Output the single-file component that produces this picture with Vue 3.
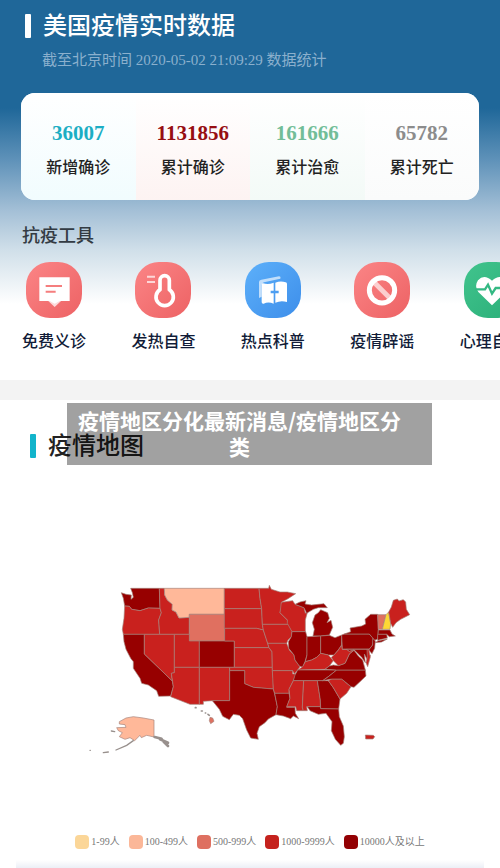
<template>
  <main class="page">
    <section class="overview">
      <header class="heading">
        <h1 class="title title-light">美国疫情实时数据</h1>
        <p class="updated">截至北京时间 2020-05-02 21:09:29 数据统计</p>
      </header>

      <dl class="stats">
        <div v-for="item in stats" :key="item.label" class="stat" :class="item.type">
          <dt>{{ item.label }}</dt>
          <dd>{{ item.value }}</dd>
        </div>
      </dl>

      <h2 class="tools-title">抗疫工具</h2>
      <nav class="tools">
        <a v-for="tool in tools" :key="tool.name" href="#" class="tool">
          <span class="tool-icon" :class="tool.color">
            <svg v-if="tool.icon === 'chat'" viewBox="0 0 168 168">
              <path d="M66 116h40l-20 19z" fill="#fff" opacity="0.75" />
              <path d="M40 46h91v71h-30l-15 8-15-8H40z" fill="#fff" />
              <path d="M59 72h49M59 89h30" stroke="#f57e7e" stroke-width="6" />
            </svg>
            <svg v-else-if="tool.icon === 'fever'" viewBox="0 0 168 168" fill="none" stroke="#fff">
              <path d="M36 44h24M36 60h24" stroke-width="6" opacity="0.7" />
              <path d="M75 83V55a14 14 0 0 1 28 0v28a26 26 0 1 1-28 0z" stroke-width="11" stroke-linejoin="round" />
            </svg>
            <svg v-else-if="tool.icon === 'book'" viewBox="0 0 168 168">
              <path d="M42 108V60q0-6 7-7l53-10q6 0 4 7l-49 11q-7 2-7 8v35z" fill="#fff" opacity="0.65" />
              <path d="M54 64q16 5 32-2v24h-9v8h9v31q-16-7-30 0-6 1-6-5V67q0-4 4-3z" fill="#fff" />
              <path d="M91 62q16-7 31-1 4 1 4 5v54q-18-6-35 2V94h10v-8H91z" fill="#fff" />
            </svg>
            <svg v-else-if="tool.icon === 'ban'" viewBox="0 0 168 168" fill="none" stroke="#fff">
              <path d="M60 61l48 48" stroke-width="15" opacity="0.65" />
              <circle cx="84" cy="85" r="38" stroke-width="15" />
            </svg>
            <svg v-else viewBox="0 0 168 168">
              <path d="M84 130L43 90Q30 73 42 55q18-20 42 1 24-21 42-1 12 18-1 35z" fill="#fff" />
              <path d="M34 82h29l9-14 12 27 11-17h38" fill="none" stroke="#34b983" stroke-width="7" />
            </svg>
          </span>
          <span>{{ tool.name }}</span>
        </a>
      </nav>
    </section>

    <section class="map-section">
      <h2 class="title title-dark">疫情地图</h2>
      <p class="banner">疫情地区分化最新消息/疫情地区分类</p>

      <svg class="map" viewBox="0 0 1020 570" role="img" aria-label="疫情地图">
        <g stroke="#a5827a" stroke-width="2" stroke-linejoin="round">
          <path v-for="(state, index) in states" :key="index" :d="state.d" :class="state.level" />
        </g>
        <g fill="none" stroke="#98908d" stroke-width="4" stroke-linecap="round">
          <path d="M160 512l-20 14-32 14M85 546l-15 2M94 483l10 2M30 541h1" />
          <path d="M224 501l20 5 8 10 12 12M240 508l24 10" stroke-width="8" />
          <path d="M346 413h2M364 423h3M376 429h1M384 433l4 3" stroke-width="5" />
        </g>
      </svg>

      <ul class="legend">
        <li v-for="item in legend" :key="item.level">
          <i :class="item.level"></i>{{ item.text }}
        </li>
      </ul>
      <div class="next-card"></div>
    </section>
  </main>
</template>

<script setup>
const stats = [
  { value: '36007', label: '新增确诊', type: 'added' },
  { value: '1131856', label: '累计确诊', type: 'confirmed' },
  { value: '161666', label: '累计治愈', type: 'cured' },
  { value: '65782', label: '累计死亡', type: 'dead' },
];

const tools = [
  { name: '免费义诊', icon: 'chat', color: 'red' },
  { name: '发热自查', icon: 'fever', color: 'red' },
  { name: '热点科普', icon: 'book', color: 'blue' },
  { name: '疫情辟谣', icon: 'ban', color: 'red' },
  { name: '心理自测', icon: 'heart', color: 'green' },
];

const legend = [
  { level: 'l1', text: '1-99人' },
  { level: 'l2', text: '100-499人' },
  { level: 'l3', text: '500-999人' },
  { level: 'l4', text: '1000-9999人' },
  { level: 'l5', text: '10000人及以上' },
];

const states = [
  // west
  { level: 'l5', d: 'M152 55H238L240 115L205 114L180 122L155 118L148 109L134 108L130 85L124 68L138 73L154 75L153 88L160 82L157 68Z' },
  { level: 'l4', d: 'M134 108L148 109L155 118L180 122L205 114L240 115L244 128L236 150L239 193H130L127 178L132 145Z' },
  { level: 'l4', d: 'M238 55H253L254 75L262 90L277 103L276 120L288 126L297 144L328 142V193H239L236 150L244 128L240 115Z' },
  { level: 'l2', d: 'M253 55H433V133H328V142L297 144L288 126L276 120L277 103L262 90L254 75Z' },
  { level: 'l3', d: 'M328 133H434V213H328Z' },
  { level: 'l5', d: 'M130 193H193V252L277 333L280 350L272 378L236 379L230 362L205 345L185 340L180 325L160 295L160 275L152 265L138 238L132 215Z' },
  { level: 'l4', d: 'M193 193H283V308L274 310L277 333L193 252Z' },
  { level: 'l4', d: 'M283 193H328V213H358V292H283Z' },
  { level: 'l5', d: 'M358 213H463V292H358Z' },
  { level: 'l4', d: 'M283 292H358V403H330L272 380L280 350L274 310L283 308Z' },
  { level: 'l4', d: 'M358 292H449V392H397L370 394V403H358Z' },
  // plains
  { level: 'l4', d: 'M433 55H537L540 85L545 116H433Z' },
  { level: 'l4', d: 'M433 116H545L547 163L550 180L530 175H433Z' },
  { level: 'l4', d: 'M434 175H530L550 180L558 205L567 233H463V213H434Z' },
  { level: 'l4', d: 'M463 233H567L576 245L577 292H463Z' },
  { level: 'l4', d: 'M449 292H577V302L579 325L580 357L555 355L520 352L494 341V302H449Z' },
  { level: 'l5', d: 'M449 302H494V341L520 352L555 355L580 357L584 372L592 410L588 434L565 447L555 458L538 470L531 490L535 508L512 504L500 480L488 446L478 436L460 433L448 449L428 439L418 418L397 392H449Z' },
  { level: 'l4', d: 'M537 55H566L568 46L574 58L600 66L622 66L647 71L624 86L604 97V112L600 128L622 150L626 163H547L545 116L540 85Z' },
  { level: 'l4', d: 'M547 163H626L636 184L634 200L624 210L620 220H563L558 205L550 180Z' },
  { level: 'l4', d: 'M563 220H620L628 240L642 255L645 270L660 290L653 300L643 312L638 302H577L576 245L567 233Z' },
  { level: 'l4', d: 'M577 302H638V312H648L640 332L627 358V370H584L580 357Z' },
  { level: 'l5', d: 'M584 370H627L630 385L620 412H645L646 430L656 446L640 438L632 446L610 438L588 434L592 410Z' },
  // lakes
  { level: 'l4', d: 'M604 97L638 92L645 103L672 113L676 130L684 120L676 150V185H636L622 160V150L600 128Z' },
  { level: 'l5', d: 'M645 103L660 96L678 92L675 102L695 105L715 103L732 101L742 113L715 113L700 118L680 130L672 113Z' },
  { level: 'l5', d: 'M699 198L703 178L697 158L705 135L715 128L722 119L743 128L748 145L741 158L753 151L758 172L748 195L722 198Z' },
  { level: 'l5', d: 'M636 185H677L681 200V255L675 275L668 292L658 288L645 270L642 255L626 235L625 215L634 200Z' },
  { level: 'l5', d: 'M681 200L722 198V250L710 262L695 270L676 275L681 255Z' },
  { level: 'l5', d: 'M722 198L748 196L765 203L785 195V225L775 240L762 255L745 255L722 250Z' },
  { level: 'l4', d: 'M653 300L668 290L676 275L695 270L710 262L722 250L745 255L760 272L748 288L735 298Z' },
  // south
  { level: 'l5', d: 'M653 300H770L745 320L728 332H640L645 315Z' },
  { level: 'l4', d: 'M640 332H671L667 412L670 422H650L647 410H620L630 385L627 358Z' },
  { level: 'l4', d: 'M671 332H712L721 390V410H680L682 422L670 422L667 412Z' },
  { level: 'l5', d: 'M712 332H745L760 353L780 387L776 417L722 416L721 390Z' },
  { level: 'l5', d: 'M682 410H721L722 416L776 417L778 440L790 468L793 500L790 520L782 526L766 508L754 482L756 455L738 430L715 433L690 422Z' },
  { level: 'l4', d: 'M745 332L755 327H785L813 350L800 370L780 387L760 353Z' },
  { level: 'l5', d: 'M770 300H856L858 318L840 335L822 352L813 350L785 327H755L728 332L745 320Z' },
  { level: 'l5', d: 'M735 298L748 288L760 285L775 287L795 280L808 252L822 241L835 258L848 270L856 300H770Z' },
  { level: 'l4', d: 'M760 272L754 262L762 255L775 240L785 225L787 238H800L808 244L822 239L808 252L795 280L775 287Z' },
  // north east
  { level: 'l5', d: 'M785 195L793 192H868L880 205L878 225L868 237H787Z' },
  { level: 'l5', d: 'M793 192L812 185L810 174L845 168L857 162L855 148L872 133H893L895 180L893 207L884 211L868 192Z' },
  { level: 'l5', d: 'M878 205L886 213L884 235L876 251L866 240L878 225Z' },
  { level: 'l5', d: 'M800 238H862L866 257L872 257L860 266L853 252L856 278L845 262L835 252L822 239L808 244Z' },
  { level: 'l4', d: 'M861 238L866 238L871 261L863 290L858 278L862 260Z' },
  { level: 'l3', d: 'M893 134H918L907 178H895Z' },
  { level: 'l1', d: 'M918 134L926 126L932 160L930 178H907Z' },
  { level: 'l4', d: 'M926 126L934 111L940 91L952 87L957 93L970 89L977 96L979 118L989 134L962 148L948 158L938 172L932 160Z' },
  { level: 'l5', d: 'M895 180H930L936 192L946 198L928 200L920 193H894Z' },
  { level: 'l5', d: 'M893 193H920L922 204L893 211Z' },
  { level: 'l5', d: 'M885 218L895 212L922 207L905 216Z' },
  // outlying
  { level: 'l4', d: 'M856 495L880 496L884 500L879 507L857 507Z' },
  { level: 'l2', d: 'M118 455L138 444L160 440L190 444L222 450V501L200 496L184 503L180 496L164 512L150 503L135 508L118 500L127 488L115 482L110 473L138 472L135 464L118 462Z' },
  { level: 'l3', d: 'M390 442L398 444L402 454L392 461L388 452Z' },
];
</script>

<style>
body {
  margin: 0;
  background: #fff;
}
</style>

<style scoped>
.page {
  overflow: hidden;
  color: #222;
  font-family: 'Liberation Serif', 'Noto Sans CJK SC', serif;
}

h1,
h2,
p,
dl,
dd,
ul {
  margin: 0;
  padding: 0;
}

.overview {
  box-sizing: border-box;
  padding-top: 10px;
  padding-bottom: 27px;
  background: linear-gradient(#1f6799 0, #1f6799 108px, #5f92b9 160px, #a3bfd6 210px, #d0dfe9 250px, #fff 304px);
}

.heading {
  padding: 0 25px;
}

.title {
  display: flex;
  align-items: center;
  gap: 12px;
  font-size: 24px;
  font-weight: 500;
  line-height: 32px;
}

.title::before {
  width: 6px;
  height: 24px;
  border-radius: 1px;
  background: #12b4cb;
  content: '';
}

.title-light {
  color: #fff;
}

.title-light::before {
  background: #fff;
}

.updated {
  padding: 8px 0 0 17px;
  color: #8bb0cd;
  font-size: 15px;
  line-height: 20px;
}

.stats {
  display: grid;
  grid-template-columns: repeat(4, 1fr);
  margin: 23px 21px 0;
  overflow: hidden;
  border-radius: 14px;
  background: #fff;
}

.stat {
  display: flex;
  flex-direction: column-reverse;
  gap: 10px;
  padding: 27px 0 21px;
  text-align: center;
}

.stat dt {
  font-size: 16px;
  font-weight: 500;
  line-height: 22px;
}

.stat dd {
  font-size: 21px;
  font-weight: 700;
  line-height: 27px;
}

.added {
  background: linear-gradient(#fff, #f1fcfe);
}

.added dd {
  color: #1caec4;
}

.confirmed {
  background: linear-gradient(#fff, #fdf3f2);
}

.confirmed dd {
  color: #970e12;
}

.cured {
  background: linear-gradient(#fff, #f3faf7);
}

.cured dd {
  color: #72bd98;
}

.dead {
  background: linear-gradient(#fff, #fafbfb);
}

.dead dd {
  color: #8c8c8c;
}

.tools-title {
  padding: 24px 22px 14px;
  color: #333b43;
  font-size: 18px;
  font-weight: 500;
  line-height: 24px;
}

.tools {
  display: flex;
  gap: 9.5%;
  padding-left: 22px;
}

.tool {
  display: flex;
  flex: 0 0 64px;
  flex-direction: column;
  align-items: center;
  gap: 13px;
  color: #111c38;
  font-size: 16px;
  font-weight: 500;
  line-height: 22px;
  text-decoration: none;
  white-space: nowrap;
}

.tool-icon {
  width: 56px;
  height: 56px;
  border-radius: 24px;
}

.tool-icon svg {
  display: block;
}

.red {
  background: linear-gradient(135deg, #fb8586, #ed6264);
}

.blue {
  background: linear-gradient(135deg, #5db0fa, #3d8eea);
}

.green {
  background: linear-gradient(135deg, #41c48d, #2aae78);
}

.map-section {
  position: relative;
  padding-top: 30px;
  border-top: 20px solid #f3f3f3;
}

.title-dark {
  padding-left: 30px;
}

.banner {
  position: absolute;
  top: 3px;
  right: 68px;
  left: 67px;
  padding: 4px 28px 6px 8px;
  background: rgba(0, 0, 0, 0.37);
  color: #fff;
  font-family: 'Noto Sans CJK SC', sans-serif;
  font-size: 21px;
  font-weight: 700;
  line-height: 26px;
  text-align: center;
}

.map {
  display: block;
  width: 68%;
  margin: 108px 16% 0;
}

.legend {
  display: flex;
  justify-content: center;
  gap: 9px;
  padding-top: 74px;
  color: #777;
  font-size: 10px;
  line-height: 16px;
  list-style: none;
  white-space: nowrap;
}

.legend li {
  display: flex;
  align-items: center;
  gap: 2px;
}

.legend i {
  width: 14px;
  height: 14px;
  border-radius: 4px;
}

.next-card {
  height: 8px;
  margin: 10px 16px 0;
  background: linear-gradient(#fff, #eceff6);
}

.l1 {
  fill: #fdd835;
  background: #fbd698;
}

.l2 {
  fill: #ffb899;
  background: #fbb798;
}

.l3 {
  fill: #e07060;
  background: #de7061;
}

.l4 {
  fill: #c9211e;
  background: #c5221d;
}

.l5 {
  fill: #970000;
  background: #930003;
}
</style>
